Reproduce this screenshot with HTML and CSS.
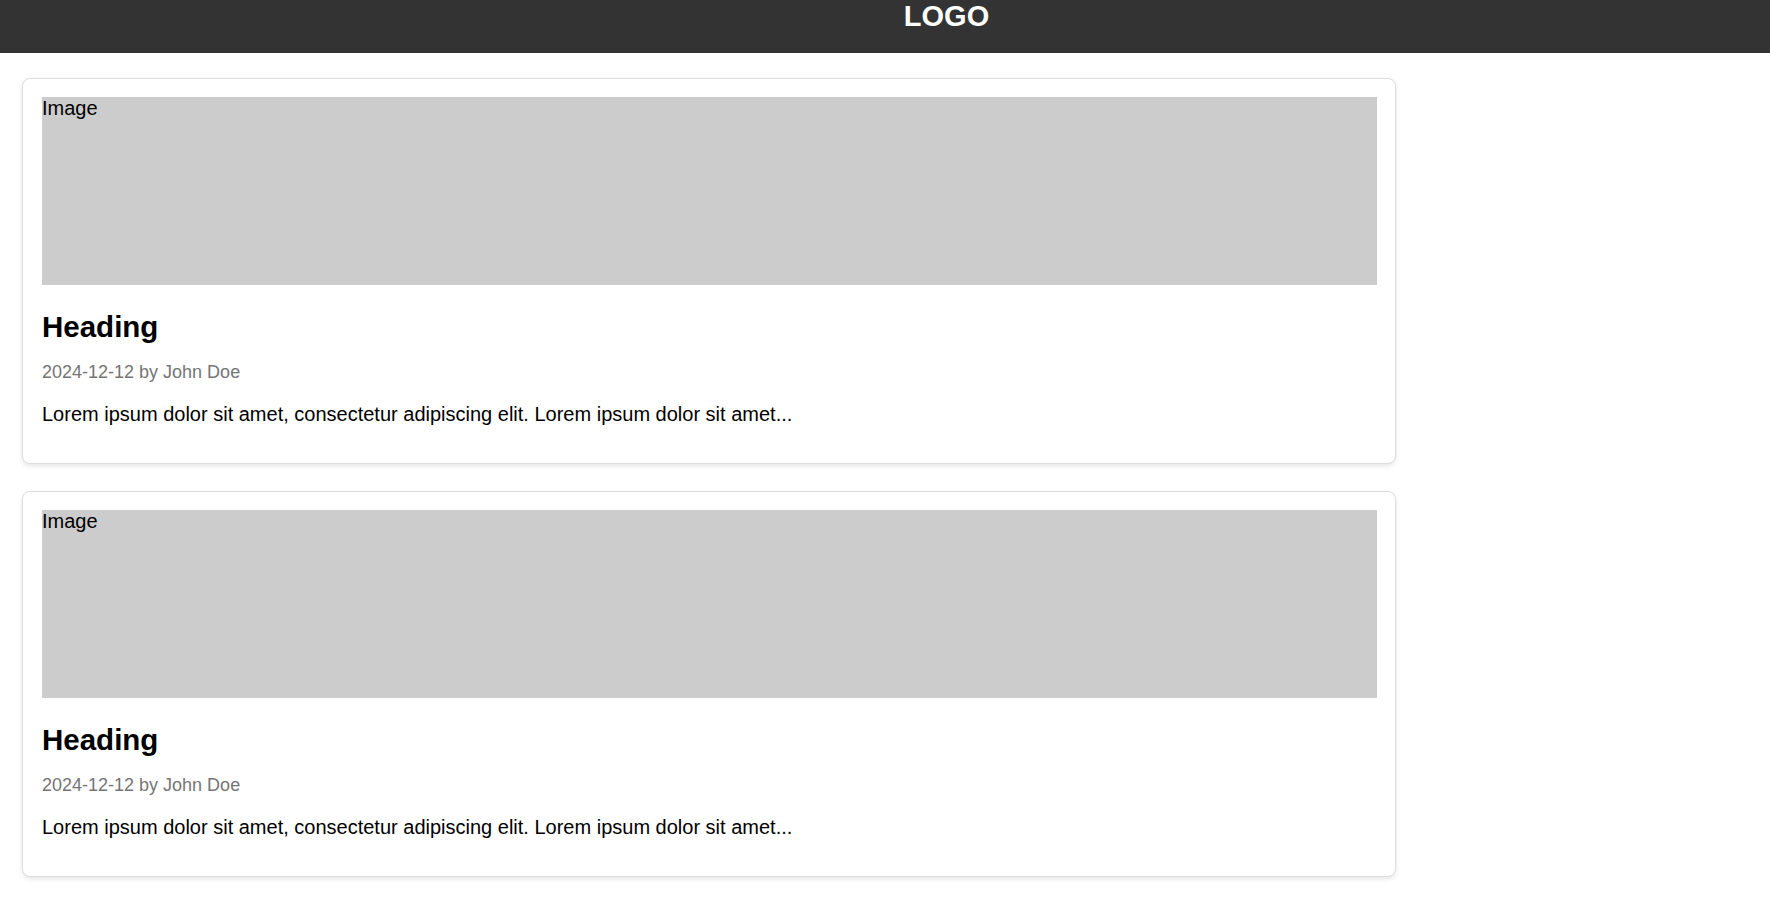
FILE: index.html
```html
<!DOCTYPE html>
<html lang="en">
<head>
<meta charset="utf-8">
<title>Blog</title>
<link rel="stylesheet" href="styles.css">
</head>
<body>
<header class="site-header">
  <div class="logo">LOGO</div>
</header>
<main class="feed">
  <article class="card">
    <div class="card-image">Image</div>
    <h2 class="card-title">Heading</h2>
    <p class="card-meta">2024-12-12 by John Doe</p>
    <p class="card-text">Lorem ipsum dolor sit amet, consectetur adipiscing elit. Lorem ipsum dolor sit amet...</p>
  </article>
  <article class="card">
    <div class="card-image">Image</div>
    <h2 class="card-title">Heading</h2>
    <p class="card-meta">2024-12-12 by John Doe</p>
    <p class="card-text">Lorem ipsum dolor sit amet, consectetur adipiscing elit. Lorem ipsum dolor sit amet...</p>
  </article>
  <article class="card card-peek" aria-hidden="true"></article>
</main>
</body>
</html>
```
FILE: styles.css
```css
* { box-sizing: border-box; }
html, body {
  margin: 0;
  padding: 0;
  background: #ffffff;
  font-family: "Liberation Sans", Arial, sans-serif;
  font-size: 18px;
  color: #000;
}
.site-header {
  height: 53px;
  background: #333333;
  display: flex;
  justify-content: center;
  align-items: flex-start;
  padding-left: 123px;
  padding-top: 2px;
}
.logo {
  color: #ffffff;
  font-weight: bold;
  font-size: 29px;
  line-height: 29px;
}
.feed {
  padding: 25px 0 0 22px;
  display: flex;
  flex-direction: column;
  gap: 26.5px;
}
.card {
  width: 1374px;
  border: 1px solid #dddddd;
  border-radius: 8px;
  box-shadow: 0 2px 5px rgba(0, 0, 0, 0.1);
  padding: 18px 18px 18px 19px;
  background: #fff;
}
.card-peek {
  height: 60px;
}
.card-image {
  height: 188px;
  background: #cccccc;
  font-size: 20px;
  line-height: 23px;
}
.card-title {
  margin: 25px 0 0;
  font-size: 29.5px;
  line-height: 34px;
  font-weight: bold;
}
.card-meta {
  margin: 18px 0 0;
  font-size: 18px;
  line-height: 21px;
  color: #757575;
}
.card-text {
  margin: 20px 0 19px;
  font-size: 20px;
  line-height: 23px;
}
```
